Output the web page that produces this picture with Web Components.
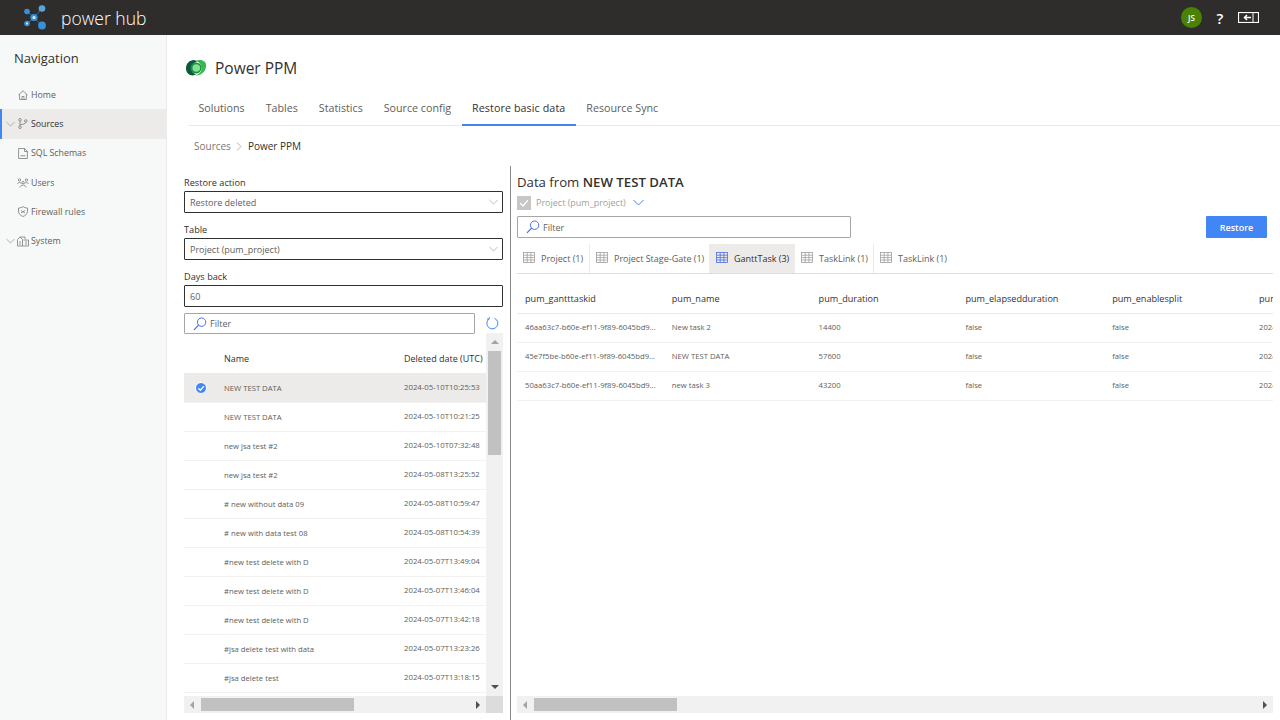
<!DOCTYPE html>
<html>
<head>
<meta charset="utf-8">
<title>power hub</title>
<style>
  html, body { margin: 0; height: 100%; overflow: hidden; background: #fff; }
  body { font-family: "Open Sans", "Noto Sans", sans-serif; color: #323130; }
</style>
</head>
<body>
<ph-app>
  <ph-header slot="header"></ph-header>
  <ph-nav slot="nav"></ph-nav>
  <ph-page-title slot="title">Power PPM</ph-page-title>
  <ph-tabs slot="tabs"></ph-tabs>
  <ph-crumbs slot="crumbs"></ph-crumbs>
  <ph-restore-panel slot="left"></ph-restore-panel>
  <ph-data-panel slot="right"></ph-data-panel>
</ph-app>

<script>
const icons = {
  chevron: '<svg width="11" height="7" viewBox="0 0 11 7"><path d="M.5 1l5 5 5-5" fill="none" stroke="currentColor"/></svg>',
  search: '<svg width="14" height="14" viewBox="0 0 14 14" fill="none" stroke="#4a6fe0"><circle cx="8.6" cy="5.2" r="4.2"/><path d="M5.6 8.2L1 12.8" stroke-width="1.2"/></svg>',
  table: '<svg width="12" height="11" viewBox="0 0 12 11" fill="none" stroke="currentColor" stroke-width=".8"><rect x=".5" y=".5" width="11" height="10"/><path d="M.5 3.2h11M.5 5.6h11M.5 8h11M4.2 .5v10M7.9 .5v10"/></svg>',
  home: '<svg width="10" height="10" viewBox="0 0 10 10" fill="none" stroke="currentColor" stroke-width=".8"><path d="M.5 5L5 .8 9.5 5M1.6 4.2v5.3h6.8V4.2M4 9.500V6.500h2v3"/></svg>',
  branch: '<svg width="10" height="11" viewBox="0 0 10 11" fill="none" stroke="currentColor" stroke-width=".8"><circle cx="2" cy="1.800" r="1.300"/><circle cx="2" cy="9.200" r="1.300"/><circle cx="7.800" cy="3" r="1.300"/><path d="M2 3.100v4.800M2 6.500c3 0 5.500-.5 5.800-2.200"/></svg>',
  doc: '<svg width="10" height="11" viewBox="0 0 10 11" fill="none" stroke="currentColor" stroke-width=".8"><path d="M.6 .5h6l2.800 2.800v7.200H.6zM6.500 .5v3h2.900M2.500 7.800h5"/></svg>',
  users: '<svg width="12" height="10" viewBox="0 0 12 10" fill="none" stroke="currentColor" stroke-width=".8"><circle cx="2.500" cy="2" r="1.200"/><circle cx="9.500" cy="2" r="1.200"/><circle cx="6" cy="4.500" r="1.200"/><path d="M.5 6c.5-2 3-2 4 0M7.500 6c.8-2 3.500-2 4 0M3 9.500c.5-3.300 5.500-3.300 6 0"/></svg>',
  shield: '<svg width="10" height="11" viewBox="0 0 10 11" fill="none" stroke="currentColor" stroke-width=".8"><path d="M5 .5c1 1 2.800 1.500 4.500 1.500v3c0 3-2 4.500-4.500 5.500C2.500 9.500.5 8 .5 5V2C2.200 2 4 1.500 5 .5z"/><path d="M3 4.500l4 2.500M7 4.500L3 7"/></svg>',
  system: '<svg width="12" height="11" viewBox="0 0 12 11" fill="none" stroke="currentColor" stroke-width=".8"><path d="M.5 3.500L3 1l2.500 2.500V10H.5zM3 1h5v2M6.500 4h5v6h-6M8 6h2M8 8h2M2 6h2M2 8h2"/></svg>'
};

function define(name, css, html, extra) {
  customElements.define(name, class extends HTMLElement {
    constructor() {
      super();
      const root = this.attachShadow({ mode: "open" });
      root.innerHTML = `<style>${css}</style>${html}`;
      if (extra) extra(root, this);
    }
  });
}

define("ph-app", `
  :host { display: grid; width: 1280px; height: 720px; grid-template-columns: 167px 1fr; grid-template-rows: 35px 1fr; }
  ::slotted([slot=header]) { grid-column: 1 / 3; }
  main { display: flex; flex-direction: column; min-width: 0; min-height: 0; }
  .head { padding: 0 0 0 18px; height: 131px; flex: none; box-sizing: border-box; }
  .cols { display: flex; flex: 1; min-height: 0; }
`, `
  <slot name="header"></slot>
  <slot name="nav"></slot>
  <main>
    <div class="head">
      <slot name="title"></slot>
      <slot name="tabs"></slot>
      <slot name="crumbs"></slot>
    </div>
    <div class="cols">
      <slot name="left"></slot>
      <slot name="right"></slot>
    </div>
  </main>
`);

define("ph-header", `
  :host { display: flex; align-items: center; background: #2f2d2c; color: #fff; height: 35px; padding: 0 21px 0 24px; box-sizing: border-box; }
  .name { font-weight: 300; font-size: 17.500px; margin-left: 15px; color: #fff; }
  .right { margin-left: auto; display: flex; align-items: center; }
  .avatar { width: 21px; height: 21px; border-radius: 50%; background: #498205; font-size: 8px; font-weight: 600; display: flex; align-items: center; justify-content: center; }
  .help { font-size: 15px; font-weight: 600; margin-left: 13px; width: 10px; text-align: center; }
  svg.back { margin-left: 13px; display: block; }
`, `
  <svg width="22" height="26" viewBox="0 0 22 26">
    <g stroke="#2c6f9d" stroke-width="1"><path d="M10 12.500L3 6.500M10 12.500L3 18.500M10 12.500L18 3.500M10 12.500L18 20.500"/></g>
    <circle cx="3" cy="6.500" r="2.800" fill="#3b8fd6"/>
    <circle cx="10" cy="12.500" r="3.600" fill="#3b8fd6"/><circle cx="10" cy="12.500" r="1.500" fill="#d7efff"/>
    <circle cx="3" cy="18.500" r="2.800" fill="#3b8fd6"/><circle cx="3" cy="18.500" r="1.100" fill="#d7efff"/>
    <circle cx="18" cy="3.500" r="3.300" fill="#5ba3d9"/>
    <circle cx="18" cy="20.500" r="3.900" fill="#3b8fd6"/>
  </svg>
  <span class="name">power hub</span>
  <div class="right">
    <span class="avatar">JS</span>
    <span class="help">?</span>
    <svg class="back" width="21" height="11" viewBox="0 0 21 11" fill="none" stroke="#fff"><rect x=".5" y=".5" width="20" height="10" stroke-width="1.200"/><path d="M15 1v9"/><path d="M13 5.500H6.500M9 3L6.500 5.500 9 8" stroke-width="1.500"/></svg>
  </div>
`);

define("ph-nav", `
  :host { display: block; background: #f7f9f8; border-right: 1px solid #edebe9; box-sizing: border-box; font-size: 8.800px; }
  h2 { font-size: 13px; font-weight: 400; margin: 0; padding: 14px 0 0 14px; height: 45px; line-height: 18px; box-sizing: border-box; color: #323130; }
  .item { display: flex; align-items: center; height: 29.300px; color: #605e5c; position: relative; padding-left: 16px; }
  .item svg { color: #7d7b79; flex: none; }
  .item span { margin-left: 2px; }
  .ico { width: 13px; display: flex; justify-content: center; }
  .item.sel { background: #edebe9; color: #323130; }
  .item.sel::before { content: ""; position: absolute; left: 0; top: 0; bottom: 0; width: 2px; background: #4285f4; }
  .exp { position: absolute; left: 6px; top: 12px; display: flex; }
  .exp svg { width: 9px; height: 6px; color: #a19f9d; }
`, `
  <h2>Navigation</h2>
  <div class="item"><i class="ico">${icons.home}</i><span>Home</span></div>
  <div class="item sel"><i class="exp">${icons.chevron}</i><i class="ico">${icons.branch}</i><span>Sources</span></div>
  <div class="item"><i class="ico">${icons.doc}</i><span>SQL Schemas</span></div>
  <div class="item"><i class="ico">${icons.users}</i><span>Users</span></div>
  <div class="item"><i class="ico">${icons.shield}</i><span>Firewall rules</span></div>
  <div class="item"><i class="exp">${icons.chevron}</i><i class="ico">${icons.system}</i><span>System</span></div>
`);

define("ph-page-title", `
  :host { display: flex; align-items: center; height: 56px; padding-top: 9px; box-sizing: border-box; font-size: 15.500px; color: #323130; }
  svg { margin-right: 8px; flex: none; }
`, `
  <svg width="22" height="18" viewBox="0 0 22 18">
    <path d="M11 1.500C14 .5 18 .8 20 3c1.700 2 1.500 6-.5 9-2 3-6 5-9.500 4.500 4-1 6.500-3.500 6.500-7S14 3 11 1.500z" fill="#35b84f"/>
    <path d="M9 1C4.500 1 1 4.500 1 9.500c0 4 3 7 6.500 7 1.500 0 2.500-.5 3.500-1.200-3-.8-4.800-3.200-4.800-6.300S8.500 3.500 12 3C11.500 2 10.500 1 9 1z" fill="#0b5a3a"/>
    <circle cx="11" cy="9" r="5.500" fill="#1d8f49"/>
    <circle cx="11.300" cy="9" r="3.800" fill="#86e08f"/>
  </svg>
  <slot></slot>
`);

define("ph-tabs", `
  :host { display: flex; height: 35px; margin-left: 3px; border-bottom: 1px solid #edebe9; box-sizing: border-box; font-size: 10.700px; color: #605e5c; }
  a { display: block; padding: 0 10.500px; line-height: 35px; height: 35px; box-sizing: border-box; white-space: nowrap; }
  a.sel { color: #323130; border-bottom: 2px solid #4285f4; letter-spacing: .1px; }
`, `
  <a>Solutions</a><a>Tables</a><a>Statistics</a><a>Source config</a><a class="sel">Restore basic data</a><a>Resource Sync</a>
`);

define("ph-crumbs", `
  :host { display: flex; align-items: center; height: 40px; padding-left: 9px; font-size: 10px; color: #797775; }
  b { font-weight: 400; color: #323130; }
  svg { margin: 0 5.500px; color: #a19f9d; }
`, `
  <span>Sources</span>
  <svg width="6" height="9" viewBox="0 0 6 9"><path d="M1 .5l4 4-4 4" fill="none" stroke="currentColor" stroke-width=".8"/></svg>
  <b>Power PPM</b>
`);

define("ph-field", `
  :host { display: block; font-size: 9px; }
  label { display: block; height: 16px; line-height: 16px; font-size: 9.200px; color: #323130; }
  .box { display: flex; align-items: center; height: 22px; border: 1px solid #323130; border-radius: 1px; box-sizing: border-box; padding: 0 4px 0 5px; color: #605e5c; }
  svg { margin-left: auto; color: #b3b1af; width: 9px; height: 6px; }
`, `
  <label></label>
  <div class="box"><span></span></div>
`, (root, el) => {
  queueMicrotask(() => {
    root.querySelector("label").textContent = el.getAttribute("label");
    root.querySelector("span").textContent = el.getAttribute("value");
    if (el.hasAttribute("select")) root.querySelector(".box").insertAdjacentHTML("beforeend", icons.chevron);
  });
});

define("ph-search", `
  :host { display: flex; align-items: center; height: 21px; border: 1px solid #a8a6a4; border-radius: 1px; box-sizing: border-box; font-size: 9px; color: #605e5c; padding-left: 8px; }
  svg { margin-right: 3px; }
`, `${icons.search}<span>Filter</span>`);

define("ph-scrollbar", `
  :host { display: flex; background: #f1f1f1; flex: none; box-sizing: border-box; position: relative; }
  :host([dir-h]) { height: 17px; align-items: center; }
  :host([dir-v]) { width: 17px; flex-direction: column; align-items: center; }
  .thumb { background: #c1c1c1; }
  :host([dir-h]) .thumb { height: 13px; }
  :host([dir-v]) .thumb { width: 13px; }
  .sp { flex: 1; }
  .a { flex: none; width: 0; height: 0; border: 4px solid transparent; }
  :host([dir-h]) .a.s { border-right-color: #a3a3a3; border-left-width: 0; margin-left: 6px; }
  :host([dir-h]) .a.e { border-left-color: #505050; border-right-width: 0; margin-right: 6px; }
  :host([dir-v]) .a.s { border-bottom-color: #a3a3a3; border-top-width: 0; margin-top: 7px; }
  :host([dir-v]) .a.e { border-top-color: #505050; border-bottom-width: 0; margin-bottom: 7px; }
`, `<i class="a s"></i><i class="gap"></i><i class="thumb"></i><i class="sp"></i><i class="a e"></i>`, (root, el) => {
  queueMicrotask(() => {
    const h = el.hasAttribute("dir-h");
    const dim = h ? "width" : "height";
    const g = root.querySelector(".gap"), t = root.querySelector(".thumb");
    g.style[dim] = el.getAttribute("gap") + "px";
    g.style.flex = "none";
    t.style[dim] = el.getAttribute("size") + "px";
    t.style.flex = "none";
  });
});

const deleted = [
  ["NEW TEST DATA", "2024-05-10T10:25:53"],
  ["NEW TEST DATA", "2024-05-10T10:21:25"],
  ["new jsa test #2", "2024-05-10T07:32:48"],
  ["new jsa test #2", "2024-05-08T13:25:52"],
  ["# new without data 09", "2024-05-08T10:59:47"],
  ["# new with data test 08", "2024-05-08T10:54:39"],
  ["#new test delete with D", "2024-05-07T13:49:04"],
  ["#new test delete with D", "2024-05-07T13:46:04"],
  ["#new test delete with D", "2024-05-07T13:42:18"],
  ["#jsa delete test with data", "2024-05-07T13:23:26"],
  ["#jsa delete test", "2024-05-07T13:18:15"]
];

define("ph-restore-panel", `
  :host { display: flex; flex-direction: column; width: 344px; flex: none; box-sizing: border-box; padding: 9px 7px 7px 17px; border-right: 1px solid #8a8886; height: 100%; font-size: 9px; }
  ph-field + ph-field { margin-top: 9px; }
  .filter { display: flex; align-items: center; margin-top: 6px; height: 21px; flex: none; }
  .filter ph-search { width: 291px; flex: none; }
  .filter svg { margin-left: 11px; }
  .grid { display: grid; grid-template-columns: 1fr 17px; grid-template-rows: 1fr 17px; flex: 1; min-height: 0; margin-top: -1px; }
  .list { overflow: hidden; min-height: 0; }
  .hd, .row { display: grid; grid-template-columns: 40px 180px 1fr; align-items: center; white-space: nowrap; }
  .hd { height: 40px; padding-top: 10px; box-sizing: border-box; color: #323130; }
  .row { height: 29px; border-bottom: 1px solid #f3f2f1; box-sizing: border-box; color: #605e5c; font-size: 7.700px; }
  .row.sel { background: #edebe9; background-clip: padding-box; height: 30px; }
  .row .d { font-size: 7.800px; position: relative; top: -1px; }
  .check { margin-left: 10.500px; display: block; }
  .corner { background: #dcdcdc; }
`, `
  <ph-field select label="Restore action" value="Restore deleted"></ph-field>
  <ph-field select label="Table" value="Project (pum_project)"></ph-field>
  <ph-field label="Days back" value="60"></ph-field>
  <div class="filter">
    <ph-search></ph-search>
    <svg width="13" height="13" viewBox="0 0 13 13" fill="none" stroke="#4285f4"><path d="M8.500 1.300A5.500 5.500 0 1 1 3 2M3.500 .2L3 2.200 1 2"/></svg>
  </div>
  <div class="grid">
    <div class="list">
      <div class="hd"><span></span><span>Name</span><span>Deleted date (UTC)</span></div>
      ${deleted.map((r, i) => `
        <div class="row${i === 0 ? " sel" : ""}">
          ${i === 0 ? '<svg class="check" width="12" height="12" viewBox="0 0 12 12"><circle cx="6" cy="6" r="5.500" fill="#4285f4" stroke="#fff"/><path d="M3.300 6.200l2 2 3.500-4" fill="none" stroke="#fff" stroke-width="1.300"/></svg>' : "<span></span>"}
          <span>${r[0]}</span><span class="d">${r[1]}</span>
        </div>`).join("")}
    </div>
    <ph-scrollbar dir-v gap="7" size="104"></ph-scrollbar>
    <ph-scrollbar dir-h gap="7" size="153"></ph-scrollbar>
    <div class="corner"></div>
  </div>
`);

const cols = ["pum_gantttaskid", "pum_name", "pum_duration", "pum_elapsedduration", "pum_enablesplit", "pum_finish"];
const rows = [
  ["46aa63c7-b60e-ef11-9f89-6045bd9...", "New task 2", "14400", "false", "false", "2024-05-10"],
  ["45e7f5be-b60e-ef11-9f89-6045bd9...", "NEW TEST DATA", "57600", "false", "false", "2024-05-10"],
  ["50aa63c7-b60e-ef11-9f89-6045bd9...", "new task 3", "43200", "false", "false", "2024-05-10"]
];
const tabs = [["Project (1)", 73], ["Project Stage-Gate (1)", 120], ["GanttTask (3)", 85], ["TaskLink (1)", 79], ["TaskLink (1)", 77]];

define("ph-data-panel", `
  :host { display: flex; flex-direction: column; flex: 1; min-width: 0; box-sizing: border-box; padding: 6px 7px 7px 6px; height: 100%; font-size: 9px; }
  h3 { font-size: 13.200px; font-weight: 400; margin: 0; line-height: 20px; height: 21px; color: #323130; }
  h3 b { font-weight: 600; }
  .pick { display: flex; align-items: center; height: 19px; color: #a19f9d; }
  .cb { width: 14px; height: 14px; background: #c8c6c4; display: flex; align-items: center; justify-content: center; margin-right: 5px; }
  .pick .chev { margin-left: 7px; color: #4285f4; display: flex; }
  .tools { display: flex; align-items: center; justify-content: space-between; margin-top: 4px; margin-right: 6px; }
  .tools ph-search { width: 334px; height: 22px; }
  button { font: 600 9px "Open Sans", sans-serif; color: #fff; background: #4285f4; border: 0; border-radius: 1px; width: 61px; height: 22px; padding: 0; }
  .tabs { display: flex; height: 30px; margin-top: 6px; border-bottom: 1px solid #e1dfdd; box-sizing: border-box; flex: none; }
  .tab { display: flex; align-items: center; box-sizing: border-box; padding-left: 6px; color: #605e5c; border-right: 1px solid #edebe9; white-space: nowrap; }
  .tab svg { color: #a19f9d; margin-right: 6px; margin-top: -2px; flex: none; }
  .tab.sel { background: #edebe9; color: #323130; border-right: 0; }
  .tab.sel svg { color: #4a6fe0; }
  .tab:last-child { border-right: 0; }
  .table { flex: 1; min-height: 0; overflow: hidden; }
  .tr { display: grid; grid-template-columns: repeat(6, 146.800px); padding: 0 0 2px 8px; align-items: center; border-bottom: 1px solid #f3f2f1; box-sizing: border-box; height: 29px; color: #605e5c; font-size: 7.700px; white-space: nowrap; }
  .tr.h { height: 40px; padding: 10px 0 0 8px; font-size: 9.100px; color: #323130; border-bottom: 1px solid #edebe9; }
`, `
  <h3>Data from <b>NEW TEST DATA</b></h3>
  <div class="pick">
    <span class="cb"><svg width="10" height="8" viewBox="0 0 10 8"><path d="M1 4l3 3 5-6" fill="none" stroke="#fff" stroke-width="1.200"/></svg></span>
    <span>Project (pum_project)</span>
    <span class="chev">${icons.chevron}</span>
  </div>
  <div class="tools"><ph-search></ph-search><button>Restore</button></div>
  <div class="tabs">
    ${tabs.map((t, i) => `<div class="tab${i === 2 ? " sel" : ""}" style="width:${t[1]}px">${icons.table}<span>${t[0]}</span></div>`).join("")}
  </div>
  <div class="table">
    <div class="tr h">${cols.map(c => `<span>${c}</span>`).join("")}</div>
    ${rows.map(r => `<div class="tr">${r.map(c => `<span>${c}</span>`).join("")}</div>`).join("")}
  </div>
  <ph-scrollbar dir-h gap="7" size="143"></ph-scrollbar>
`);
</script>
</body>
</html>
